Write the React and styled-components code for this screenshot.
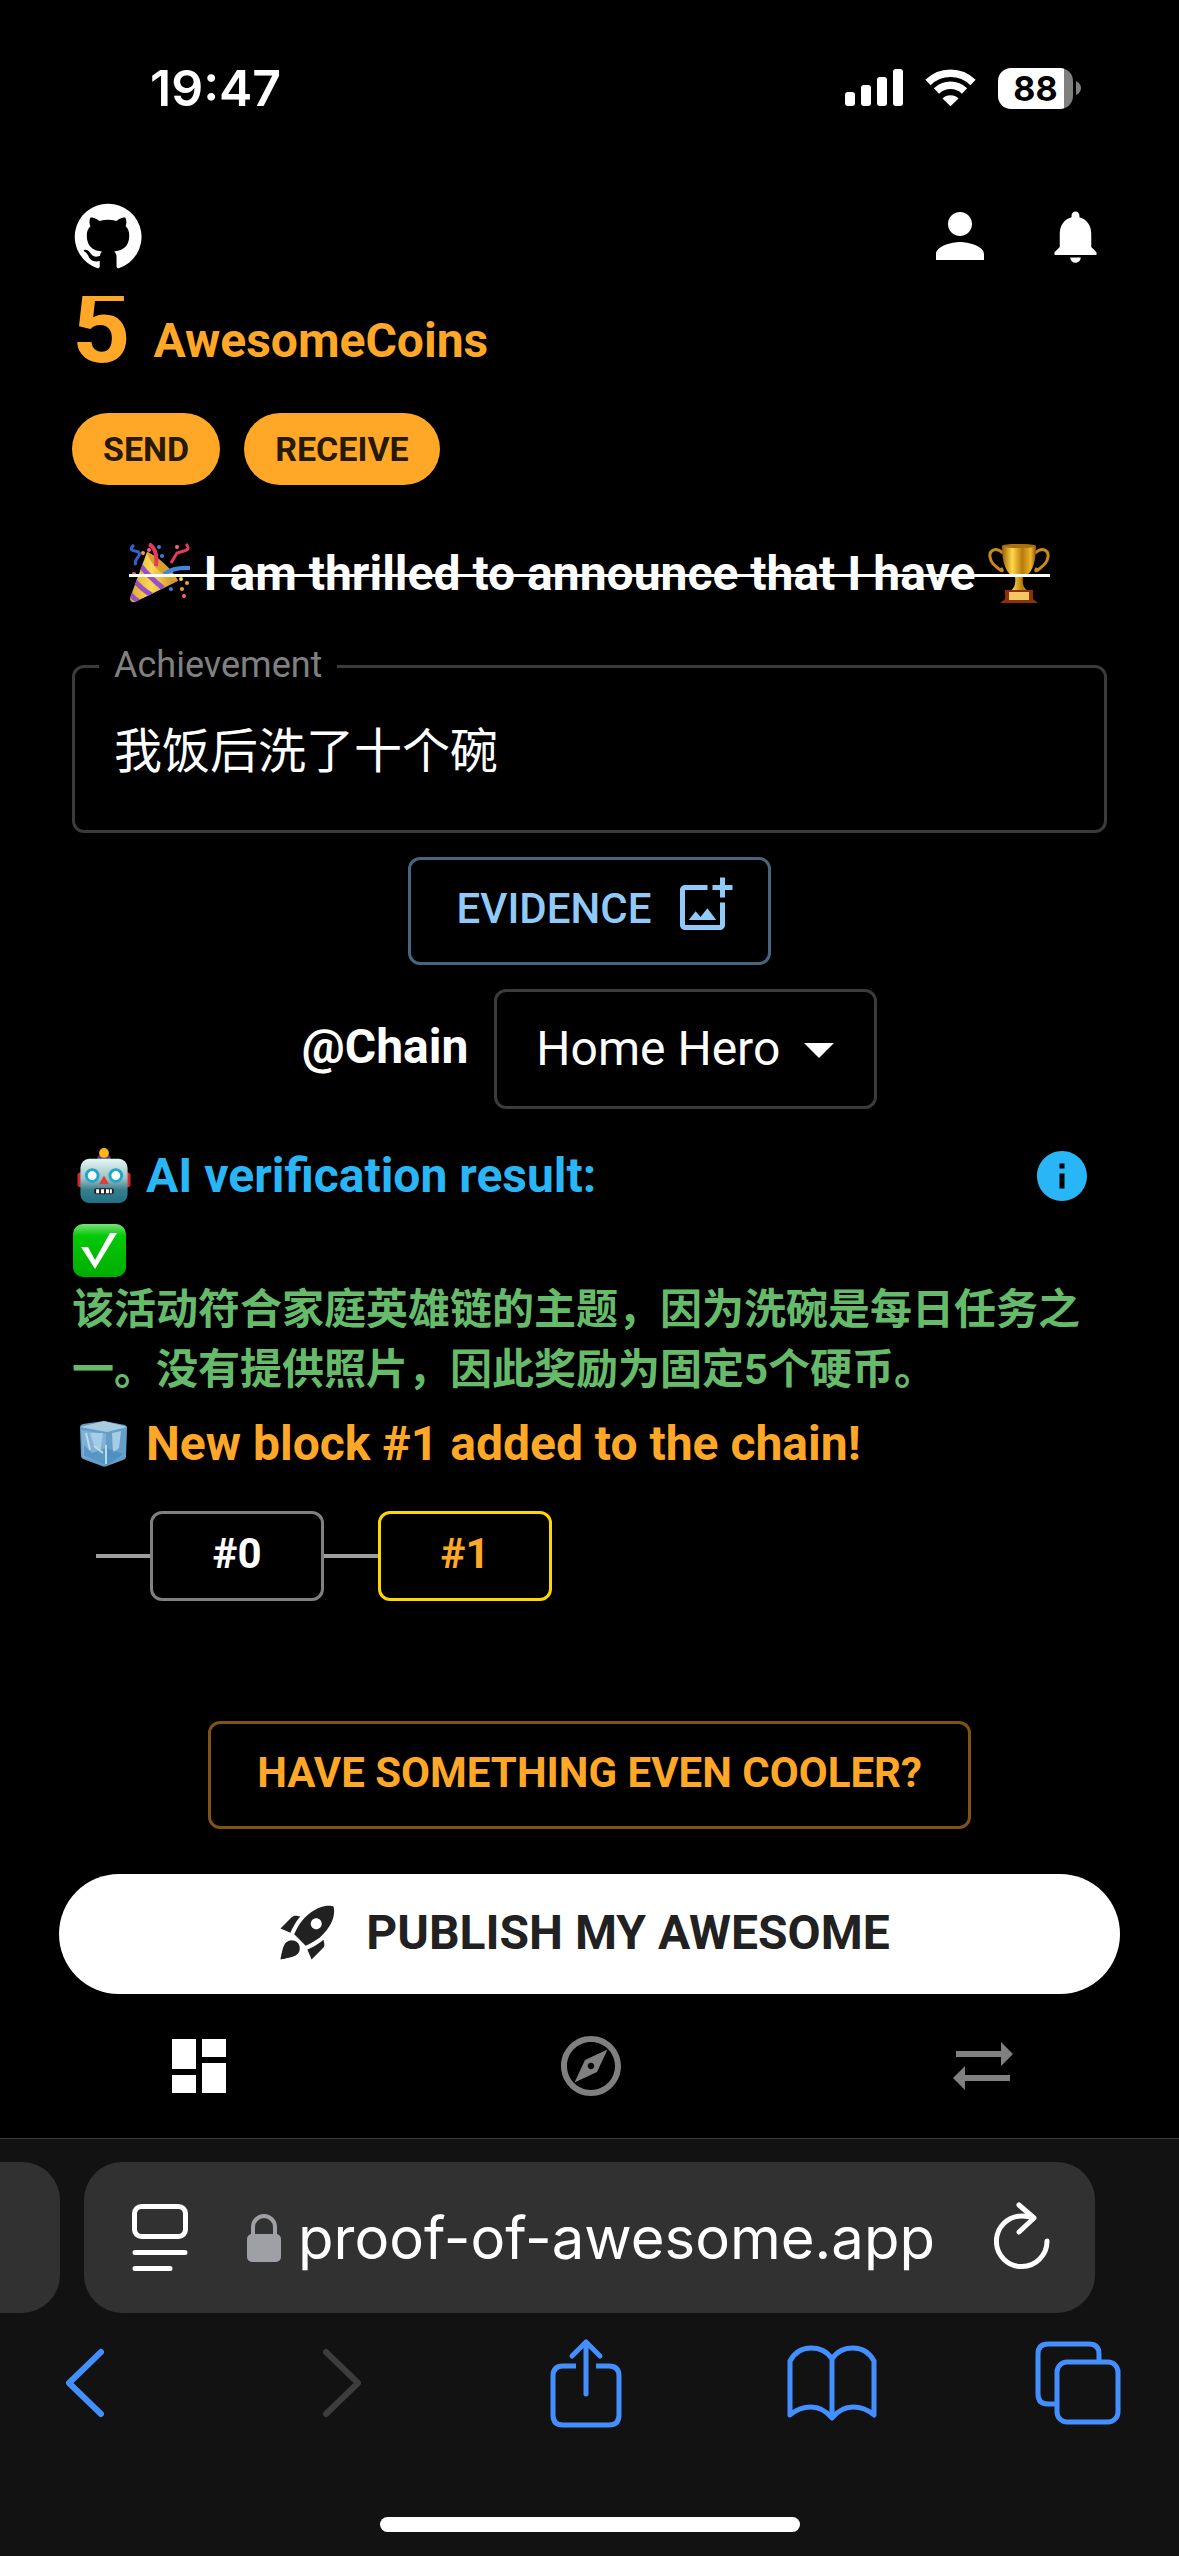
import React from "react";
import styled, { createGlobalStyle } from "styled-components";
import {
  MdPerson, MdNotifications, MdOutlineAddPhotoAlternate, MdArrowDropDown, MdInfo,
  MdRocketLaunch, MdDashboard, MdOutlineExplore, MdSyncAlt,
} from "react-icons/md";

const GlobalStyle = createGlobalStyle`
  *, *::before, *::after { box-sizing: border-box; }
  html, body, #root { margin: 0; min-height: 100%; background: #000; }
  body { font-family: Roboto, "Noto Sans CJK SC", sans-serif; color: #fff; font-size: 48px; }
  h1, h2, h3, p, fieldset { margin: 0; padding: 0; border: 0; }
  button { font-family: inherit; color: inherit; background: none; border: 0; padding: 0; margin: 0; cursor: pointer; }
  svg { display: block; flex: none; }
`;

const Screen = styled.div`
  min-height: 100vh;
  display: flex;
  flex-direction: column;
`;

const StatusBar = styled.header`
  display: flex;
  justify-content: space-between;
  align-items: center;
  height: 176px;
  padding: 0 98px 0 150px;
`;
const Clock = styled.time`
  font: 600 50px/64px Inter, sans-serif;
`;
const StatusIcons = styled.div`
  display: flex;
  align-items: center;
  gap: 22px;
`;
const Battery = styled.div`
  display: flex;
  align-items: center;
  gap: 3px;
`;
const BatteryBody = styled.span`
  width: 75px;
  height: 41px;
  border-radius: 13px;
  background: linear-gradient(to right, #fff 88%, #808080 88%);
  color: #000;
  font: 700 34px/41px Inter, sans-serif;
  text-align: center;
`;

const AppBar = styled.div`
  display: flex;
  align-items: center;
  justify-content: space-between;
  height: 120px;
  padding: 0 72px;
`;
const BarActions = styled.div`
  display: flex;
  align-items: center;
  gap: 48px;
`;
const IconButton = styled.button`
  display: flex;
  align-items: center;
  justify-content: center;
`;

const Main = styled.main`
  flex: 1;
  display: flex;
  flex-direction: column;
  padding: 0 72px;
`;
const Balance = styled.div`
  display: flex;
  align-items: flex-end;
  gap: 23px;
  height: 93px;
  overflow: hidden;
  color: #ffa726;
  font-weight: 700;
`;
const BalanceValue = styled.span`
  font-size: 102px;
  line-height: 124px;
`;
const BalanceUnit = styled.span`
  padding-bottom: 12px;
  line-height: 72px;
`;
const WalletActions = styled.div`
  display: flex;
  gap: 24px;
  margin-top: 24px;
`;
const Pill = styled.button`
  height: 72px;
  padding: 0 31px;
  border-radius: 36px;
  background: #ffa726;
  color: rgba(0, 0, 0, 0.87);
  font-size: 34px;
  line-height: 72px;
  font-weight: 700;
`;
const Announce = styled.h1`
  position: relative;
  display: flex;
  align-items: center;
  align-self: center;
  gap: 13px;
  margin-top: 55px;
  height: 68px;
  font-size: 48px;
  line-height: 68px;
  font-weight: 700;
  white-space: nowrap;
  &::after {
    content: "";
    position: absolute;
    left: 0;
    right: 0;
    top: 50%;
    height: 3px;
    background: #fff;
  }
`;

const Field = styled.fieldset`
  margin-top: 40px;
  min-width: 0;
  border: 3px solid #3b3b3b;
  border-radius: 12px;
`;
const FieldLegend = styled.legend`
  margin-left: 24px;
  padding: 0 15px 3px;
  color: #808080;
  font-size: 36px;
  line-height: 34px;
`;
const FieldInput = styled.textarea`
  display: block;
  width: 100%;
  height: 145px;
  padding: 33px 39px 0;
  border: 0;
  outline: 0;
  resize: none;
  overflow: hidden;
  background: transparent;
  color: #fff;
  font: 400 48px/68px Roboto, "Noto Sans CJK SC", sans-serif;
`;

const OutlinedButton = styled.button`
  display: flex;
  align-items: center;
  align-self: center;
  gap: 24px;
  height: 108px;
  padding: ${(p) => (p.$hasIcon ? "0 33px 4px 46px" : "0 46px 4px")};
  border: 3px solid ${(p) => p.$line};
  border-radius: 12px;
  color: ${(p) => p.$tone};
  font-size: 42px;
  line-height: 72px;
  font-weight: ${(p) => p.$weight};
  margin-top: 24px;
  > svg { margin-bottom: 8px; }
`;

const ChainRow = styled.div`
  display: flex;
  align-items: center;
  justify-content: center;
  gap: 26px;
  margin-top: 24px;
`;
const ChainLabel = styled.label`
  padding-bottom: 4px;
  font-weight: 700;
  line-height: 56px;
`;
const SelectBox = styled.div`
  display: grid;
  align-items: center;
  > * { grid-area: 1 / 1; }
  > svg { justify-self: end; margin-right: 22px; pointer-events: none; }
`;
const Select = styled.select`
  appearance: none;
  height: 120px;
  padding: 0 94px 0 39px;
  border: 3px solid #3b3b3b;
  border-radius: 12px;
  background: transparent;
  color: #fff;
  font: 400 48px/72px Roboto, sans-serif;
`;

const Heading = styled.h2`
  display: flex;
  align-items: center;
  gap: 15px;
  padding-left: 5px;
  height: 72px;
  color: ${(p) => p.$tone};
  font-size: 48px;
  line-height: 72px;
  font-weight: 700;
`;
const ResultHead = styled.div`
  display: flex;
  align-items: center;
  justify-content: space-between;
  padding-right: 15px;
  margin-top: 31px;
`;
const Result = styled.p`
  margin-top: 8px;
  color: #66bb6a;
  font-size: 42px;
  line-height: 60px;
  font-weight: 700;
`;
const ResultMark = styled.span`
  display: flex;
  align-items: center;
  height: 60px;
`;
const NewBlock = styled.div`
  margin-top: 8px;
`;

const Blocks = styled.ol`
  list-style: none;
  display: flex;
  margin: 31px 0 0;
  padding: 0 0 0 24px;
`;
const Block = styled.li`
  display: flex;
  align-items: center;
  &::before {
    content: "";
    width: 54px;
    height: 4px;
    background: #9e9e9e;
  }
`;
const BlockLink = styled.a`
  width: 174px;
  height: 90px;
  border: 3px solid ${(p) => (p.$current ? "#ffd700" : "#808080")};
  border-radius: 12px;
  color: ${(p) => (p.$current ? "#ffa726" : "#fff")};
  font-size: 42px;
  line-height: 80px;
  font-weight: 700;
  text-align: center;
  text-decoration: none;
`;

const Cooler = styled.div`
  display: flex;
  justify-content: center;
  margin-top: 96px;
`;

const Footer = styled.footer`
  display: flex;
  flex-direction: column;
  padding-top: 45px;
`;
const Publish = styled.button`
  display: flex;
  align-items: center;
  justify-content: center;
  gap: 25px;
  height: 120px;
  margin: 0 59px;
  padding: 0 14px 4px 0;
  border-radius: 60px;
  background: #fff;
  color: #212121;
  font-size: 48px;
  font-weight: 700;
`;
const Nav = styled.nav`
  display: grid;
  grid-template-columns: repeat(3, 1fr);
  height: 144px;
  padding-left: 3px;
`;
const NavLink = styled.a`
  display: flex;
  align-items: center;
  justify-content: center;
  color: ${(p) => (p.$active ? "#fff" : "#808080")};
`;

const Browser = styled.section`
  border-top: 1px solid #3a3a3a;
  background: #121212;
  height: 418px;
  padding-top: 23px;
  display: flex;
  flex-direction: column;
`;
const Tabs = styled.div`
  display: flex;
  gap: 24px;
  padding-right: 84px;
`;
const TabStub = styled.div`
  width: 60px;
  background: #313131;
  border-radius: 0 38px 38px 0;
`;
const AddressBar = styled.div`
  flex: 1;
  display: flex;
  align-items: center;
  justify-content: space-between;
  height: 151px;
  padding: 0 45px 0 48px;
  border-radius: 38px;
  background: #313131;
`;
const Address = styled.a`
  display: flex;
  align-items: center;
  gap: 17px;
  color: #fff;
  text-decoration: none;
  font: 400 58px/76px Inter, sans-serif;
`;
const Toolbar = styled.div`
  display: flex;
  justify-content: space-between;
  align-items: center;
  height: 140px;
  padding: 0 55px 0 48px;
  color: #448fff;
  > button { width: 92px; }
`;
const HomeIndicator = styled.div`
  width: 420px;
  height: 15px;
  margin: auto auto 24px;
  border-radius: 8px;
  background: #fff;
`;

const SignalIcon = () => (
  <svg width="58" height="38" viewBox="0 0 58 38" fill="#fff" aria-hidden="true">
    <rect x="0" y="23" width="10" height="14" rx="3" />
    <rect x="16" y="16" width="10" height="21" rx="3" />
    <rect x="32" y="8" width="10" height="29" rx="3" />
    <rect x="48" y="0" width="10" height="37" rx="3" />
  </svg>
);
const WifiIcon = () => (
  <svg width="51" height="38" viewBox="0 0 51 38" fill="none" stroke="#fff" aria-hidden="true">
    <path d="M3 13.5a32 32 0 0 1 45 0" strokeWidth="7.5" />
    <path d="M11.5 22a20 20 0 0 1 28 0" strokeWidth="7.5" />
    <path d="M17.5 29.5a11.3 11.3 0 0 1 16 0l-8 7.7z" fill="#fff" stroke="none" />
  </svg>
);
const BatteryTip = () => (
  <svg width="5" height="14" viewBox="0 0 5 14" fill="#808080" aria-hidden="true"><path d="M0 0q5 2.5 5 7t-5 7z" /></svg>
);
const GithubIcon = () => (
  <svg width="72" height="72" viewBox="0 0 24 24" fill="#fff" aria-hidden="true">
    <path d="M12 1.27a11 11 0 00-3.48 21.46c.55.09.73-.28.73-.55v-1.84c-3.03.64-3.67-1.46-3.67-1.46-.55-1.29-1.28-1.65-1.28-1.65-.92-.65.1-.65.1-.65 1.1 0 1.73 1.1 1.73 1.1.92 1.65 2.57 1.2 3.21.92a2 2 0 01.64-1.47c-2.47-.27-5.04-1.19-5.04-5.5 0-1.1.46-2.1 1.2-2.84a3.76 3.76 0 010-2.93s.91-.28 3.11 1.1c1.8-.49 3.7-.49 5.5 0 2.1-1.38 3.02-1.1 3.02-1.1a3.76 3.76 0 01.1 2.93c.83.74 1.2 1.74 1.2 2.94 0 4.21-2.57 5.13-5.04 5.4.45.37.82.92.82 2.02v3.03c0 .27.1.64.73.55A11 11 0 0012 1.27" />
  </svg>
);
const PartyIcon = () => (
  <svg width="62" height="62" viewBox="0 0 62 62" aria-hidden="true">
    <defs>
      <linearGradient id="cone" x1="0" x2="1"><stop offset="0" stopColor="#e0a928" /><stop offset=".45" stopColor="#fbd95a" /><stop offset="1" stopColor="#c98a1c" /></linearGradient>
      <clipPath id="coneClip"><path d="M18 9C28 13 44 27 49 38L6 59q-5 1-5-4z" /></clipPath>
    </defs>
    <path d="M18 9C28 13 44 27 49 38L6 59q-5 1-5-4z" fill="url(#cone)" />
    <path d="M18 9C28 13 44 27 49 38C38 37 20 21 18 9z" fill="#d9a02c" />
    <g clipPath="url(#coneClip)" fill="none" stroke="#9650cc" strokeWidth="5">
      <path d="M11 22Q20 34 34 45M4 36Q12 46 24 53M0 49Q5 57 13 60" />
    </g>
    <path d="M5 2q-6 5 1 6t3 6-2 8" fill="none" stroke="#2f62cf" strokeWidth="3" />
    <path d="M20 1q9 5 7 22" fill="none" stroke="#e23b5c" strokeWidth="4" />
    <path d="M57 1q5 5-2 7t-7 2-6 10" fill="none" stroke="#e23b5c" strokeWidth="3" />
    <path d="M35 31q10-7 26-6" fill="none" stroke="#3f86e6" strokeWidth="4" />
    <g fill="#ff5f86"><circle cx="48" cy="4" r="2" /><circle cx="5" cy="31" r="2" /><circle cx="55" cy="53" r="2" /><circle cx="20" cy="7" r="2" /></g>
    <g fill="#3b7fe0"><circle cx="30" cy="4" r="2" /><circle cx="42" cy="46" r="2" /><circle cx="33" cy="13" r="2" /></g>
    <g fill="#f2a03a"><circle cx="14" cy="10" r="2" /><circle cx="53" cy="46" r="2" /><circle cx="58" cy="40" r="2" /></g>
    <circle cx="52" cy="36" r="2" fill="#f3e04b" />
  </svg>
);
const TrophyIcon = () => (
  <svg width="62" height="62" viewBox="0 0 62 62" aria-hidden="true">
    <defs><linearGradient id="gold" x1="0" x2="1"><stop offset="0" stopColor="#9b5e05" /><stop offset=".3" stopColor="#ffd84a" /><stop offset=".6" stopColor="#b97a0c" /><stop offset=".85" stopColor="#eeb52a" /><stop offset="1" stopColor="#8c5000" /></linearGradient></defs>
    <path d="M15 10C7 3 1 8 2 14s4 8 9 12 3 0 2-1M47 10c8-7 14-2 13 4s-4 8-9 12-3 0-2-1" fill="none" stroke="#c8891a" strokeWidth="3" />
    <path d="M14 3q17-4 34 0 0 27-13 31-1 6 1 10l3 4H23l3-4q2-4 1-10Q14 30 14 3z" fill="url(#gold)" />
    <ellipse cx="31" cy="3" rx="17" ry="2" fill="#a8700f" />
    <path d="M17 47h28v9l5 4H12l5-4z" fill="#8a3206" />
    <rect x="21" y="49" width="20" height="8" fill="#f3c766" />
  </svg>
);
const RobotIcon = () => (
  <svg width="54" height="56" viewBox="2 1 54 57" aria-hidden="true">
    <defs><linearGradient id="bot" x2="0" y2="1"><stop offset="0" stopColor="#e4f7f6" /><stop offset=".45" stopColor="#9dbfc2" /><stop offset=".7" stopColor="#35808f" /><stop offset="1" stopColor="#1e7085" /></linearGradient></defs>
    <rect x="2" y="26" width="54" height="15" rx="3" fill="#d3292a" />
    <ellipse cx="29" cy="12" rx="7" ry="5" fill="#5b3b77" />
    <circle cx="29" cy="6" r="5" fill="#ffb31f" />
    <rect x="5" y="12" width="48" height="45" rx="9" fill="url(#bot)" />
    <circle cx="17" cy="29" r="6" fill="#fff" stroke="#20a7c9" strokeWidth="3" />
    <circle cx="41" cy="29" r="6" fill="#fff" stroke="#20a7c9" strokeWidth="3" />
    <path d="M29 29l5 9H24z" fill="#e33d3b" />
    <rect x="19" y="42" width="20" height="6" rx="2" fill="#222" />
    <path d="M21 43h3v4h-3zM26 43h3v4h-3zM31 43h3v4h-3zM35 43h2v4h-2z" fill="#fff" />
  </svg>
);
const CheckIcon = () => (
  <svg width="54" height="54" viewBox="0 0 54 54" aria-label="Verified">
    <defs><linearGradient id="tick" x2="0" y2="1"><stop offset="0" stopColor="#7be07b" /><stop offset=".22" stopColor="#04c908" /><stop offset="1" stopColor="#00ad00" /></linearGradient></defs>
    <rect x="1" y="1" width="53" height="53" rx="10" fill="url(#tick)" />
    <path d="M9 24h7l7 13 15-27h7L23 46z" fill="#fff" />
  </svg>
);
const IceIcon = () => (
  <svg width="54" height="54" viewBox="3 2 54 54" aria-hidden="true">
    <path d="M6 12q0-2 3-3l21-3 21 4q2 1 2 3l-1 29q0 2-3 3l-16 6q-3 1-5 0L9 44q-2-1-2-3z" fill="#649fc9" />
    <path d="M6 12l24-6 23 6-20 5z" fill="#a9cbdf" />
    <path d="M7 15l25 4v29L9 42z" fill="#7fb2d4" />
    <path d="M16 18h13l-3 20-6-8zM38 18l9-2-2 17-6 5z" fill="#a5cde5" />
    <path d="M10 30l8 8 14-5 17 6-15 11-24-9z" fill="#4488bd" opacity=".65" />
    <path d="M32 30v19M20 31l9 7M12 18l4 17" stroke="#b9dbeb" strokeWidth="2" />
  </svg>
);

const line = { fill: "none", stroke: "currentColor", strokeWidth: 5, strokeLinecap: "round", strokeLinejoin: "round", "aria-hidden": true };
const PageIcon = () => (
  <svg width="56" height="68" viewBox="0 0 56 68" {...line}>
    <rect x="2.5" y="2.5" width="51" height="30" rx="7" /><path d="M3 48.500h50M3 64.500h35" />
  </svg>
);
const LockIcon = () => (
  <svg width="34" height="50" viewBox="0 0 34 50" aria-hidden="true">
    <path d="M6 24V14a11 11 0 0 1 22 0v10" fill="none" stroke="#9f9fa6" strokeWidth="4" />
    <rect y="21" width="34" height="28" rx="5" fill="#9f9fa6" />
  </svg>
);
const ReloadIcon = () => (
  <svg width="56" height="72" viewBox="0 0 56 72" {...line}>
    <path d="M53 39a25.300 25.300 0 1 1-25-25q6 0 12 2M25 3L40 16 25 30" />
  </svg>
);
const BackIcon = () => <svg width="66" height="72" viewBox="0 0 66 72" {...line}><path d="M40 5L8 36l32 31" strokeWidth="6" /></svg>;
const ForwardIcon = () => <svg width="52" height="72" viewBox="0 0 52 72" {...line}><path d="M12 5l32 31-32 31" strokeWidth="6" stroke="#3d3d3d" /></svg>;
const ShareIcon = () => (
  <svg width="72" height="90" viewBox="0 0 72 90" {...line}>
    <path d="M26 28H13q-10 0-10 10v39q0 10 10 10h46q10 0 10-10V38q0-10-10-10H46" strokeLinecap="butt" />
    <path d="M36 56V4M22 18L36 4l14 14" />
  </svg>
);
const BookIcon = () => (
  <svg width="90" height="76" viewBox="0 0 90 76" {...line}>
    <path d="M45 14Q38 3 24 3T3 16v54Q12 62 24 62t21 11q9-11 21-11t21 8V16Q80 3 66 3T45 14zv58" />
  </svg>
);
const TabsIcon = () => (
  <svg width="86" height="84" viewBox="0 0 86 84" {...line}>
    <rect x="22" y="21" width="61" height="60" rx="10" />
    <path d="M64 20v-7q0-10-10-10H13q-10 0-10 10v40q0 10 10 10h8" strokeLinecap="butt" />
  </svg>
);

export default function App() {
  return (
    <Screen>
      <GlobalStyle />
      <StatusBar>
        <Clock>19:47</Clock>
        <StatusIcons>
          <SignalIcon />
          <WifiIcon />
          <Battery><BatteryBody>88</BatteryBody><BatteryTip /></Battery>
        </StatusIcons>
      </StatusBar>
      <AppBar>
        <IconButton aria-label="GitHub"><GithubIcon /></IconButton>
        <BarActions>
          <IconButton aria-label="Account"><MdPerson size={72} /></IconButton>
          <IconButton aria-label="Notifications"><MdNotifications size={63} /></IconButton>
        </BarActions>
      </AppBar>
      <Main>
        <Balance><BalanceValue>5</BalanceValue><BalanceUnit>AwesomeCoins</BalanceUnit></Balance>
        <WalletActions><Pill>SEND</Pill><Pill>RECEIVE</Pill></WalletActions>
        <Announce><PartyIcon />I am thrilled to announce that I have<TrophyIcon /></Announce>
        <Field>
          <FieldLegend><label htmlFor="achievement">Achievement</label></FieldLegend>
          <FieldInput id="achievement" defaultValue="我饭后洗了十个碗" />
        </Field>
        <OutlinedButton $hasIcon $tone="#90caf9" $line="#486580" $weight={500}>
          EVIDENCE<MdOutlineAddPhotoAlternate size={60} />
        </OutlinedButton>
        <ChainRow>
          <ChainLabel htmlFor="chain">@Chain</ChainLabel>
          <SelectBox>
            <Select id="chain"><option>Home Hero</option></Select>
            <MdArrowDropDown size={72} />
          </SelectBox>
        </ChainRow>
        <ResultHead>
          <Heading $tone="#29b6f6"><RobotIcon />AI verification result:</Heading>
          <IconButton aria-label="About verification"><MdInfo size={60} color="#29b6f6" /></IconButton>
        </ResultHead>
        <Result>
          <ResultMark><CheckIcon /></ResultMark>
          该活动符合家庭英雄链的主题，因为洗碗是每日任务之一。没有提供照片，因此奖励为固定5个硬币。
        </Result>
        <NewBlock><Heading $tone="#ffa726"><IceIcon />New block #1 added to the chain!</Heading></NewBlock>
        <Blocks>
          <Block><BlockLink href="#0">#0</BlockLink></Block>
          <Block><BlockLink href="#1" $current>#1</BlockLink></Block>
        </Blocks>
        <Cooler>
          <OutlinedButton $tone="#ffa726" $line="#7f5313" $weight={700}>HAVE SOMETHING EVEN COOLER?</OutlinedButton>
        </Cooler>
      </Main>
      <Footer>
        <Publish><MdRocketLaunch size={66} />PUBLISH MY AWESOME</Publish>
        <Nav>
          <NavLink href="#home" aria-label="Dashboard" $active><MdDashboard size={72} /></NavLink>
          <NavLink href="#explore" aria-label="Explore"><MdOutlineExplore size={72} /></NavLink>
          <NavLink href="#transfer" aria-label="Transfers"><MdSyncAlt size={72} /></NavLink>
        </Nav>
      </Footer>
      <Browser>
        <Tabs>
          <TabStub />
          <AddressBar>
            <IconButton aria-label="Page menu"><PageIcon /></IconButton>
            <Address href="#home"><LockIcon />proof-of-awesome.app</Address>
            <IconButton aria-label="Reload"><ReloadIcon /></IconButton>
          </AddressBar>
        </Tabs>
        <Toolbar>
          <IconButton aria-label="Back"><BackIcon /></IconButton>
          <IconButton aria-label="Forward"><ForwardIcon /></IconButton>
          <IconButton aria-label="Share"><ShareIcon /></IconButton>
          <IconButton aria-label="Bookmarks"><BookIcon /></IconButton>
          <IconButton aria-label="Tabs"><TabsIcon /></IconButton>
        </Toolbar>
        <HomeIndicator />
      </Browser>
    </Screen>
  );
}
